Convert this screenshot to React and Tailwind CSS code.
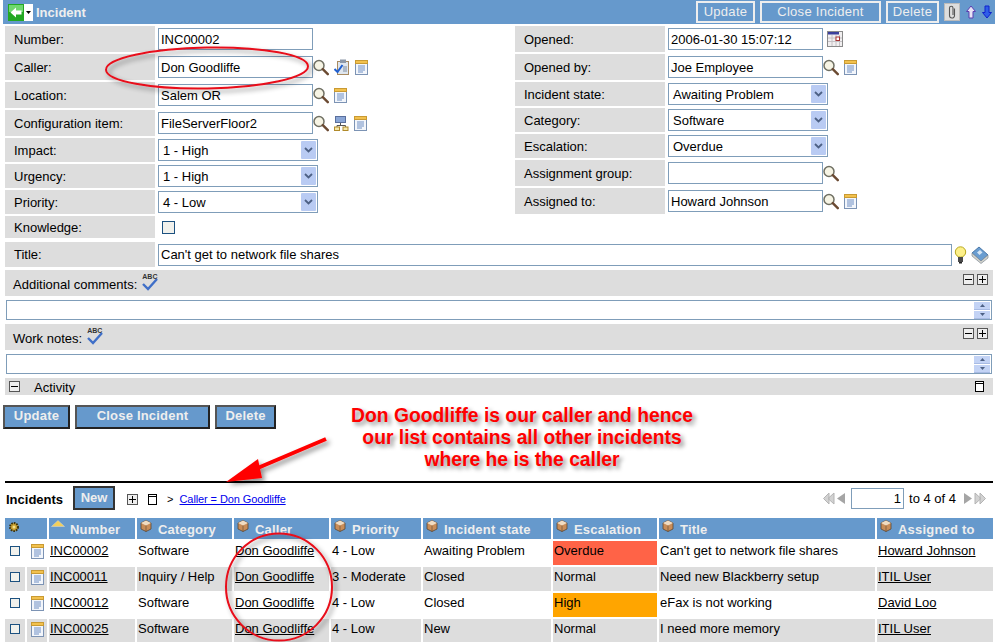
import React from 'react';

const Magnifier = () => (
  <svg width="16" height="17" viewBox="0 0 16 17" className="shrink-0">
    <circle cx="6" cy="6.5" r="5" fill="#f6f4e4" stroke="#6f6f62" strokeWidth="1.5" />
    <path d="M9.8 10.2 L14.8 15.2" stroke="#6b4a32" strokeWidth="2.4" strokeLinecap="round" />
  </svg>
);

const Note = () => (
  <svg width="13" height="15" viewBox="0 0 13 15" className="shrink-0">
    <rect x="0.5" y="0.5" width="12" height="14" fill="#f3f6fb" stroke="#7c93b4" />
    <rect x="0.5" y="0.5" width="12" height="3" fill="#f2c14e" stroke="#c99a32" />
    <path d="M3 6 H10 M3 8 H10 M3 10 H10 M3 12 H8" stroke="#6f8fc4" strokeWidth="1" />
  </svg>
);

const ClipCheck = () => (
  <svg width="16" height="16" viewBox="0 0 16 16" className="shrink-0">
    <rect x="3.5" y="2.5" width="11" height="13" fill="#dfe6ee" stroke="#a88a60" />
    <rect x="6" y="0.5" width="6" height="3.5" fill="#8c98a8" />
    <path d="M9 8 H13 M9 10 H13 M9 12 H13" stroke="#7d8ba0" />
    <path d="M0.5 10 L3.5 13 L8.5 6" fill="none" stroke="#1f5fd0" strokeWidth="2" />
  </svg>
);

const TreeIcon = () => (
  <svg width="15" height="15" viewBox="0 0 15 15" className="shrink-0">
    <rect x="1.5" y="0.5" width="10" height="6" fill="#8aa6d6" stroke="#5a6f9c" />
    <path d="M6.5 7 V9.5 M3 11 V9.5 H11.5 V11" fill="none" stroke="#555" />
    <rect x="0.5" y="11" width="5" height="3.5" fill="#f5e7a8" stroke="#b08a2a" />
    <rect x="9" y="11" width="5" height="3.5" fill="#f5e7a8" stroke="#b08a2a" />
  </svg>
);

const Calendar = () => (
  <svg width="16" height="16" viewBox="0 0 16 16" className="shrink-0">
    <rect x="0.5" y="0.5" width="15" height="15" fill="#f1eff0" stroke="#8a8a8a" />
    <path d="M1 7 H15 M1 10.5 H15 M5 4 V15 M9 4 V15 M12.5 4 V15" stroke="#c4c0c4" />
    <rect x="1" y="1" width="11" height="2.5" fill="#3a3f9c" />
    <rect x="9" y="6" width="3.5" height="3.5" fill="#fff" stroke="#a83232" />
  </svg>
);

const Bulb = () => (
  <svg width="13" height="18" viewBox="0 0 13 18" className="shrink-0">
    <circle cx="6.5" cy="6" r="5.2" fill="#fdf08a" stroke="#b8a820" />
    <rect x="4" y="11" width="5" height="5" fill="#4a4a4a" />
    <rect x="5" y="16" width="3" height="1.5" fill="#222" />
  </svg>
);

const Book = () => (
  <svg width="18" height="18" viewBox="0 0 18 18" className="shrink-0">
    <path d="M1 7 L8 1 L17 9 L10 15 Z" fill="#6a9dd0" stroke="#4a78a8" />
    <path d="M1 7 L1 10 L10 17.5 L17 12 L17 9 L10 15 Z" fill="#d4d4cc" stroke="#7f8a96" strokeWidth="0.7" />
    <path d="M6 6.5 L9 4 L11.5 6.5 L8.5 9 Z" fill="#d7e6f4" />
  </svg>
);

const BoxBtn = ({ children }) => (
  <span className="w-[11px] h-[11px] border border-[#555555] bg-[#eeeeee] flex items-center justify-center">
    <svg width="9" height="9" viewBox="0 0 9 9">{children}</svg>
  </span>
);
const MinusBox = () => <BoxBtn><path d="M1 4.5 H8" stroke="#000" /></BoxBtn>;
const PlusBox = () => <BoxBtn><path d="M1 4.5 H8 M4.5 1 V8" stroke="#000" /></BoxBtn>;

const Collapse = () => (
  <svg width="9" height="11" viewBox="0 0 9 11" className="shrink-0">
    <rect x="0.5" y="0.5" width="8" height="10" fill="#fff" stroke="#000" />
    <path d="M0.5 2.5 H8.5" stroke="#000" />
  </svg>
);

const SpellCheck = () => (
  <span className="relative inline-block w-[17px] h-[18px] shrink-0">
    <span className="absolute left-0 top-0 text-[7px] leading-none font-bold text-[#333333]">ABC</span>
    <svg width="16" height="13" viewBox="0 0 16 13" className="absolute left-0 top-[5px]">
      <path d="M1 6 L6 11 L15 1" fill="none" stroke="#3f6fc8" strokeWidth="2.4" />
    </svg>
  </span>
);

const Cube = () => (
  <svg width="12" height="12" viewBox="0 0 12 12" className="shrink-0">
    <path d="M6 0.5 L11 3 V9 L6 11.5 L1 9 V3 Z" fill="#c98d58" stroke="#5a4632" strokeWidth="0.8" />
    <path d="M1 3 L6 5.5 L11 3 L6 0.5 Z" fill="#f0dcc2" />
    <path d="M6 5.5 V11.5" stroke="#5a4632" strokeWidth="0.6" />
  </svg>
);

const SortUp = () => (
  <svg width="14" height="7" viewBox="0 0 14 7" className="shrink-0">
    <path d="M7 0.5 L13.5 6.5 H0.5 Z" fill="#f2cf5a" stroke="#d8d8d8" strokeWidth="0.5" />
  </svg>
);

const Gear = () => (
  <svg width="12" height="12" viewBox="0 0 12 12">
    <circle cx="6" cy="6" r="4" fill="#c8a030" stroke="#3c3310" strokeWidth="2" strokeDasharray="1.6 1" />
    <circle cx="6" cy="6" r="1.5" fill="#f5e08a" />
  </svg>
);

const Clip = () => (
  <span className="w-[16px] h-[18px] bg-[#dddddd] border border-[#bbbbbb] flex items-center justify-center">
    <svg width="8" height="14" viewBox="0 0 8 14">
      <path d="M6.5 3.5 V10.5 A2.5 2.5 0 0 1 1.5 10.5 V3 A1.7 1.7 0 0 1 5 3 V10" fill="none" stroke="#555" strokeWidth="1.1" />
    </svg>
  </span>
);

const UpArrow = () => (
  <svg width="10" height="14" viewBox="0 0 10 14">
    <path d="M5 1 L9.5 6.5 H7 V13 H3 V6.5 H0.5 Z" fill="#e8e2f5" stroke="#5a3fb0" />
  </svg>
);
const DownArrow = () => (
  <svg width="10" height="14" viewBox="0 0 10 14">
    <path d="M5 13 L9.5 7.5 H7 V1 H3 V7.5 H0.5 Z" fill="#2f5fe8" stroke="#1122cc" />
  </svg>
);

const Arrows = ({ dir }) => (
  <svg width="23" height="13" viewBox="0 0 23 13" className={dir === 'next' ? 'rotate-180' : ''}>
    <path d="M11 1 L5 6.5 L11 12 Z M6 1 L0.5 6.5 L6 12 Z" fill="#d2d2d2" stroke="#b4b4b4" />
    <path d="M22 1 L14 6.5 L22 12 Z" fill="#a5a5a5" />
  </svg>
);

const Input = ({ value, w = 'w-[155px]' }) => (
  <div className={`${w} h-[22px] border border-[#7f9db9] bg-white flex items-center pl-[2px] pt-[1px] text-[13px] whitespace-nowrap overflow-hidden`}>
    {value}
  </div>
);

const Select = ({ value }) => (
  <div className="w-[160px] h-[22px] border border-[#7f9db9] bg-white flex items-center justify-between pl-[4px] pr-[1px] text-[13px]">
    <span className="pt-[1px]">{value}</span>
    <span className="w-[15px] h-[18px] rounded-[1px] bg-[#b9cbf3] flex items-center justify-center">
      <svg width="9" height="6" viewBox="0 0 9 6">
        <path d="M1 1 L4.5 4.5 L8 1" fill="none" stroke="#4d6185" strokeWidth="1.8" />
      </svg>
    </span>
  </div>
);

const Row = ({ label, h, children }) => (
  <div className="flex items-center gap-[3px]" style={{ height: h }}>
    <div className="w-[150px] h-full bg-[#dddddd] flex items-center pl-[9px] pt-[1px] text-[13px]">{label}</div>
    {children}
  </div>
);

const Icons = ({ children }) => <div className="flex items-center gap-[5px] ml-[-3px]">{children}</div>;

const Scroller = () => (
  <div className="h-[20px] border border-[#7f9db9] bg-white flex justify-end items-center pr-[1px]">
    <div className="w-[16px] flex flex-col gap-[1px]">
      <div className="h-[8px] bg-[#c3d3f5] border-b border-[#a8bbe4] flex items-center justify-center">
        <svg width="5" height="3" viewBox="0 0 5 3"><path d="M2.5 0 L5 3 H0 Z" fill="#4d6185" /></svg>
      </div>
      <div className="h-[8px] bg-[#c3d3f5] border-b border-[#a8bbe4] flex items-center justify-center">
        <svg width="5" height="3" viewBox="0 0 5 3"><path d="M2.5 3 L5 0 H0 Z" fill="#4d6185" /></svg>
      </div>
    </div>
  </div>
);

const SolidButton = ({ w, children }) => (
  <div
    className="h-[24px] pb-[2px] bg-[#6699cc] border-2 border-[#555555] border-r-[#222222] border-b-[#222222] flex items-center justify-center text-[13px] font-bold text-[#eeeeee] tracking-[0.2px]"
    style={{ width: w }}
  >
    {children}
  </div>
);

const TopButton = ({ w, children }) => (
  <div
    className="h-[22px] border-2 border-[#eeeeee] flex items-center justify-center text-[13px] text-[#eeeeee] tracking-[0.3px]"
    style={{ width: w }}
  >
    {children}
  </div>
);

const columns = ['Number', 'Category', 'Caller', 'Priority', 'Incident state', 'Escalation', 'Title', 'Assigned to'];

const incidents = [
  { num: 'INC00002', cat: 'Software', pri: '4 - Low', state: 'Awaiting Problem', esc: 'Overdue', title: "Can't get to network file shares", who: 'Howard Johnson' },
  { num: 'INC00011', cat: 'Inquiry / Help', pri: '3 - Moderate', state: 'Closed', esc: 'Normal', title: 'Need new Blackberry setup', who: 'ITIL User' },
  { num: 'INC00012', cat: 'Software', pri: '4 - Low', state: 'Closed', esc: 'High', title: 'eFax is not working', who: 'David Loo' },
  { num: 'INC00025', cat: 'Software', pri: '4 - Low', state: 'New', esc: 'Normal', title: 'I need more memory', who: 'ITIL User' },
];

const App = () => {
  return (
    <div className="relative w-[1000px] h-[642px] overflow-hidden bg-white text-black text-[13px] font-['Liberation_Sans',Arial,sans-serif]">
      {/* BARRA SUPERIOR */}
      <div className="ml-[3px] w-[992px] h-[24px] bg-[#6699cc] flex items-center">
        <div className="ml-[5px] w-[25px] h-[17px] bg-white flex items-center">
          <svg width="16" height="17" viewBox="0 0 16 17">
            <rect width="16" height="17" fill="#22a822" />
            <rect x="1" y="1" width="14" height="7" fill="#6fd86f" />
            <path d="M2.5 8.5 L8 3.5 V6.5 H13.5 V10.5 H8 V13.5 Z" fill="#fff" />
          </svg>
          <svg width="9" height="5" viewBox="0 0 9 5"><path d="M2 1 H7 L4.5 4 Z" fill="#000" /></svg>
        </div>
        <span className="ml-[3px] pt-[1px] font-bold text-[13px] text-[#eeeeee]">Incident</span>
        <div className="ml-auto flex items-center gap-[5px]">
          <TopButton w={59}>Update</TopButton>
          <TopButton w={121}>Close Incident</TopButton>
          <TopButton w={53}>Delete</TopButton>
          <div className="flex items-center gap-[6px] pr-[3px]">
            <Clip />
            <UpArrow />
            <DownArrow />
          </div>
        </div>
      </div>

      {/* FORMULARIO */}
      <div className="ml-[5px] mt-[2px] flex">
        <div className="w-[510px] flex flex-col gap-[2px]">
          <Row label="Number:" h={26}><Input value="INC00002" /></Row>
          <Row label="Caller:" h={26}>
            <Input value="Don Goodliffe" />
            <Icons><Magnifier /><ClipCheck /><Note /></Icons>
          </Row>
          <Row label="Location:" h={26}>
            <Input value="Salem OR" />
            <Icons><Magnifier /><Note /></Icons>
          </Row>
          <Row label="Configuration item:" h={26}>
            <Input value="FileServerFloor2" />
            <Icons><Magnifier /><TreeIcon /><Note /></Icons>
          </Row>
          <Row label="Impact:" h={24}><Select value="1 - High" /></Row>
          <Row label="Urgency:" h={24}><Select value="1 - High" /></Row>
          <Row label="Priority:" h={24}><Select value="4 - Low" /></Row>
          <Row label="Knowledge:" h={22}>
            <div className="ml-[4px] w-[13px] h-[13px] border border-[#1c5180] bg-[#f1f1ec]" />
          </Row>
        </div>
        <div className="flex flex-col gap-[2px]">
          <Row label="Opened:" h={26}>
            <Input value="2006-01-30 15:07:12" />
            <div className="ml-[1px]"><Calendar /></div>
          </Row>
          <Row label="Opened by:" h={26}>
            <Input value="Joe Employee" />
            <Icons><Magnifier /><Note /></Icons>
          </Row>
          <Row label="Incident state:" h={24}><Select value="Awaiting Problem" /></Row>
          <Row label="Category:" h={24}><Select value="Software" /></Row>
          <Row label="Escalation:" h={24}><Select value="Overdue" /></Row>
          <Row label="Assignment group:" h={26}>
            <Input value="" />
            <Icons><Magnifier /></Icons>
          </Row>
          <Row label="Assigned to:" h={26}>
            <Input value="Howard Johnson" />
            <Icons><Magnifier /><Note /></Icons>
          </Row>
        </div>
      </div>

      <div className="ml-[5px] mt-[4px]">
        <Row label="Title:" h={25}>
          <Input value="Can't get to network file shares" w="w-[794px]" />
          <div className="flex items-center gap-[4px] ml-[-1px]"><Bulb /><Book /></div>
        </Row>
      </div>

      {/* COMENTARIOS */}
      <div className="ml-[5px] w-[988px] mt-[3px] flex flex-col">
        <div className="h-[26px] bg-[#dddddd] flex items-start pl-[8px]">
          <span className="mt-[5px] text-[13px]">Additional comments:</span>
          <span className="ml-[5px] mt-[3px]"><SpellCheck /></span>
          <span className="ml-auto flex gap-[3px] pt-[4px] pr-[5px]"><MinusBox /><PlusBox /></span>
        </div>
        <div className="mt-[4px] mx-[1px]"><Scroller /></div>
        <div className="mt-[4px] h-[26px] bg-[#dddddd] flex items-start pl-[8px]">
          <span className="mt-[5px] text-[13px]">Work notes:</span>
          <span className="ml-[5px] mt-[3px]"><SpellCheck /></span>
          <span className="ml-auto flex gap-[3px] pt-[4px] pr-[5px]"><MinusBox /><PlusBox /></span>
        </div>
        <div className="mt-[4px] mx-[1px]"><Scroller /></div>
        <div className="mt-[4px] h-[17px] bg-[#dddddd] flex items-center pl-[4px] mb-[1px]">
          <MinusBox />
          <span className="ml-[14px] pt-[2px] text-[13px]">Activity</span>
          <span className="ml-auto pr-[9px]"><Collapse /></span>
        </div>
      </div>

      {/* BOTONES */}
      <div className="ml-[3px] mt-[9px] flex gap-[5px]">
        <SolidButton w={67}>Update</SolidButton>
        <SolidButton w={135}>Close Incident</SolidButton>
        <SolidButton w={61}>Delete</SolidButton>
      </div>

      {/* LISTA */}
      <div className="ml-[5px] w-[988px] mt-[52px] border-t-[2px] border-black flex items-center h-[35px]">
        <span className="ml-[1px] pt-[1px] font-bold text-[13px]">Incidents</span>
        <div className="ml-[10px] mb-[3px]">
          <div className="w-[42px] h-[24px] bg-[#6699cc] border-2 border-[#333333] flex items-center justify-center text-[13px] font-bold text-[#eeeeee]">New</div>
        </div>
        <span className="ml-[12px]"><PlusBox /></span>
        <span className="ml-[10px]"><Collapse /></span>
        <span className="ml-[10px] text-[11px]">&gt;</span>
        <span className="ml-[6px] text-[11px] text-[#0000ee] underline tracking-[-0.1px]">Caller = Don Goodliffe</span>
        <div className="ml-auto flex items-center pr-[7px] mb-[3px]">
          <Arrows dir="prev" />
          <div className="ml-[5px] w-[53px] h-[21px] border border-[#7f9db9] text-right pr-[2px] text-[13px] leading-[19px]">1</div>
          <span className="ml-[5px] pt-[2px] text-[13px]">to 4 of 4</span>
          <span className="ml-[7px]"><Arrows dir="next" /></span>
        </div>
      </div>

      <table className="ml-[3px] w-[992px] table-fixed border-separate border-spacing-[2px] text-[13px]">
        <colgroup>
          <col className="w-[20px]" />
          <col className="w-[20px]" />
          <col className="w-[86px]" />
          <col className="w-[95px]" />
          <col className="w-[95px]" />
          <col className="w-[90px]" />
          <col className="w-[128px]" />
          <col className="w-[104px]" />
          <col className="w-[216px]" />
          <col className="w-[116px]" />
        </colgroup>
        <thead>
          <tr>
            <th colSpan={2} className="h-[21px] p-0 bg-[#6699cc] align-top pl-[3px] pt-[3px]">
              <Gear />
            </th>
            {columns.map((c) => (
              <th key={c} className="h-[21px] p-0 pl-[2px] bg-[#6699cc] align-top text-left">
                <div className="flex items-start">
                  <span className="w-[14px] flex justify-center mt-[2px]">
                    {c === 'Number' ? <SortUp /> : <Cube />}
                  </span>
                  <span className="ml-[5px] mt-[4px] leading-[15px] font-bold text-[#eeeeee] whitespace-nowrap tracking-[0.2px]">{c}</span>
                </div>
              </th>
            ))}
          </tr>
        </thead>
        <tbody>
          {incidents.map((inc, i) => {
            const bg = i % 2 === 1 ? 'bg-[#dddddd]' : 'bg-white';
            const cell = 'h-[24px] p-0 pl-[1px] align-top whitespace-nowrap overflow-hidden';
            const escBg = inc.esc === 'Overdue' ? 'bg-[#ff6347]' : inc.esc === 'High' ? 'bg-[#ffa500]' : bg;
            return (
              <tr key={inc.num}>
                <td className={`${cell} ${bg} pl-[5px] pt-[5px]`}>
                  <div className="w-[10px] h-[10px] border border-[#1c5180] bg-[#f1f1ec]" />
                </td>
                <td className={`${cell} ${bg} pl-[4px] pt-[3px]`}><Note /></td>
                <td className={`${cell} ${bg}`}><span className="underline">{inc.num}</span></td>
                <td className={`${cell} ${bg}`}>{inc.cat}</td>
                <td className={`${cell} ${bg}`}><span className="underline">Don Goodliffe</span></td>
                <td className={`${cell} ${bg}`}>{inc.pri}</td>
                <td className={`${cell} ${bg}`}>{inc.state}</td>
                <td className={`${cell} ${escBg}`}>{inc.esc}</td>
                <td className={`${cell} ${bg}`}>{inc.title}</td>
                <td className={`${cell} ${bg}`}><span className="underline">{inc.who}</span></td>
              </tr>
            );
          })}
        </tbody>
      </table>

      {/* ANOTACIONES */}
      <div className="absolute left-[280px] top-[405px] w-[484px] text-center text-[19.3px] leading-[22px] font-bold text-[#ff0000] [text-shadow:3px_3px_4px_rgba(0,0,0,0.45)]">
        Don Goodliffe is our caller and hence
        <br />
        our list contains all other incidents
        <br />
        where he is the caller
      </div>

      <svg width="1000" height="642" viewBox="0 0 1000 642" className="absolute left-0 top-0 pointer-events-none">
        <defs>
          <filter id="sombra" x="-20%" y="-20%" width="150%" height="150%">
            <feDropShadow dx="3" dy="3" stdDeviation="2.5" floodColor="#000" floodOpacity="0.45" />
          </filter>
        </defs>
        <g filter="url(#sombra)">
          <ellipse cx="207" cy="68" rx="101" ry="20.5" fill="none" stroke="#e8101a" strokeWidth="2" transform="rotate(-1 207 68)" />
          <ellipse cx="279" cy="587" rx="53" ry="53.5" fill="none" stroke="#e8101a" strokeWidth="2" />
          <path d="M326 439 L253 470" stroke="#ff0000" strokeWidth="4" fill="none" />
          <path d="M226 482 L258 459 L262 478 Z" fill="#ff0000" />
        </g>
      </svg>
    </div>
  );
};

export default App;
